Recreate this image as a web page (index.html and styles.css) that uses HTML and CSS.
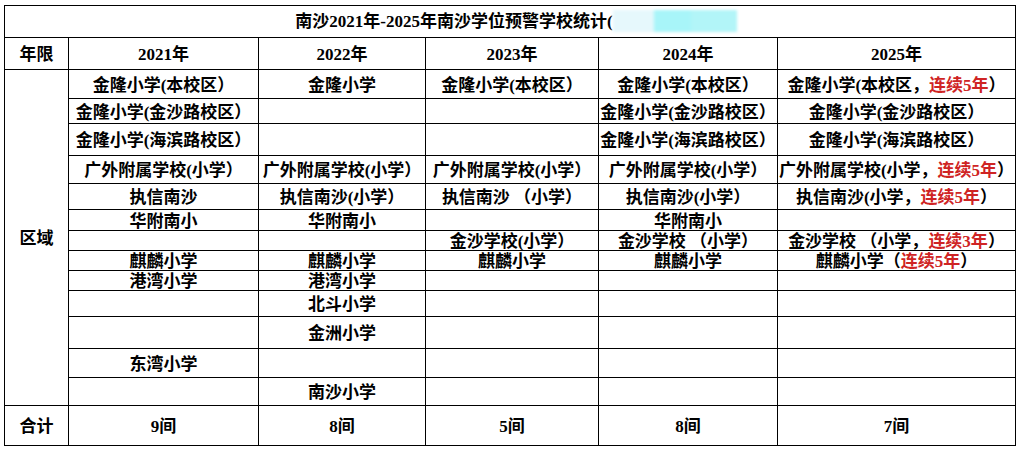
FILE: index.html
```html
<!DOCTYPE html>
<html lang="zh-CN">
<head>
<meta charset="utf-8">
<title>南沙学位预警学校统计</title>
<link rel="stylesheet" href="styles.css">
</head>
<body>
<div class="sheet">
<table class="stats">
  <colgroup>
    <col class="c0"><col class="c1"><col class="c2"><col class="c3"><col class="c4"><col class="c5">
  </colgroup>
  <tbody>
    <tr class="h32">
      <td colspan="6" class="title">南沙2021年-2025年南沙学位预警学校统计(<span class="blur"></span></td>
    </tr>
    <tr class="h32">
      <td>年限</td><td>2021年</td><td>2022年</td><td>2023年</td><td>2024年</td><td>2025年</td>
    </tr>
    <tr class="h29">
      <td rowspan="13">区域</td>
      <td>金隆小学(本校区）</td><td>金隆小学</td><td>金隆小学(本校区）</td><td>金隆小学(本校区）</td><td>金隆小学(本校区，<span class="red">连续5年</span>）</td>
    </tr>
    <tr class="h25">
      <td>金隆小学(金沙路校区）</td><td></td><td></td><td>金隆小学(金沙路校区）</td><td>金隆小学(金沙路校区）</td>
    </tr>
    <tr class="h32">
      <td>金隆小学(海滨路校区）</td><td></td><td></td><td>金隆小学(海滨路校区）</td><td>金隆小学(海滨路校区）</td>
    </tr>
    <tr class="h28">
      <td>广外附属学校(小学）</td><td>广外附属学校(小学）</td><td>广外附属学校(小学）</td><td>广外附属学校(小学）</td><td>广外附属学校(小学，<span class="red">连续5年</span>）</td>
    </tr>
    <tr class="h26">
      <td>执信南沙</td><td>执信南沙(小学）</td><td>执信南沙 （小学）</td><td>执信南沙(小学）</td><td>执信南沙(小学，<span class="red">连续5年</span>）</td>
    </tr>
    <tr class="h21">
      <td>华附南小</td><td>华附南小</td><td></td><td>华附南小</td><td></td>
    </tr>
    <tr class="h20">
      <td></td><td></td><td>金沙学校(小学）</td><td>金沙学校 （小学）</td><td>金沙学校 （小学，<span class="red">连续3年</span>）</td>
    </tr>
    <tr class="h20">
      <td>麒麟小学</td><td>麒麟小学</td><td>麒麟小学</td><td>麒麟小学</td><td>麒麟小学（<span class="red">连续5年</span>）</td>
    </tr>
    <tr class="h20">
      <td>港湾小学</td><td>港湾小学</td><td></td><td></td><td></td>
    </tr>
    <tr class="h26">
      <td></td><td>北斗小学</td><td></td><td></td><td></td>
    </tr>
    <tr class="h32">
      <td></td><td>金洲小学</td><td></td><td></td><td></td>
    </tr>
    <tr class="h29">
      <td>东湾小学</td><td></td><td></td><td></td><td></td>
    </tr>
    <tr class="h28">
      <td></td><td>南沙小学</td><td></td><td></td><td></td>
    </tr>
    <tr class="h40">
      <td>合计</td><td>9间</td><td>8间</td><td>5间</td><td>8间</td><td>7间</td>
    </tr>
  </tbody>
</table>
</div>
</body>
</html>
```

FILE: styles.css
```css
html, body {
  margin: 0;
  padding: 0;
  background: #ffffff;
}

.sheet {
  padding: 5px 0 0 4px;
  height: 453px;
  box-sizing: border-box;
  overflow: hidden;
}

.stats {
  border-collapse: collapse;
  table-layout: fixed;
  width: 1012px;
  font-family: "Liberation Serif", "Noto Sans CJK SC", serif;
  font-weight: 700;
  font-size: 17px;
  line-height: 17px;
  color: #000;
}

.c0 { width: 64px; }
.c1 { width: 190px; }
.c2 { width: 167px; }
.c3 { width: 173px; }
.c4 { width: 179px; }
.c5 { width: 238px; }

.stats td {
  border: 1px solid #000;
  padding: 2px 0 0 0;
  text-align: center;
  vertical-align: middle;
  white-space: nowrap;
  overflow: hidden;
}

.h20 { height: 20px; }
.h21 { height: 21px; }
.h25 { height: 25px; }
.h26 { height: 26px; }
.h28 { height: 28px; }
.h29 { height: 29px; }
.h32 { height: 32px; }
.h40 { height: 40px; }

.stats td.title {
  padding-left: 12px;
}

.blur {
  display: inline-block;
  width: 124px;
  height: 22px;
  vertical-align: middle;
  margin-top: -4px;
  background: linear-gradient(to right, #e6f8fc 0, #e6f8fc 32%, #a8f5f9 34%, #a8f5f9 62%, #b2f5f8 64%, #b2f5f8 100%);
  filter: blur(1.5px);
}

.red {
  color: #cf2424;
}
```
